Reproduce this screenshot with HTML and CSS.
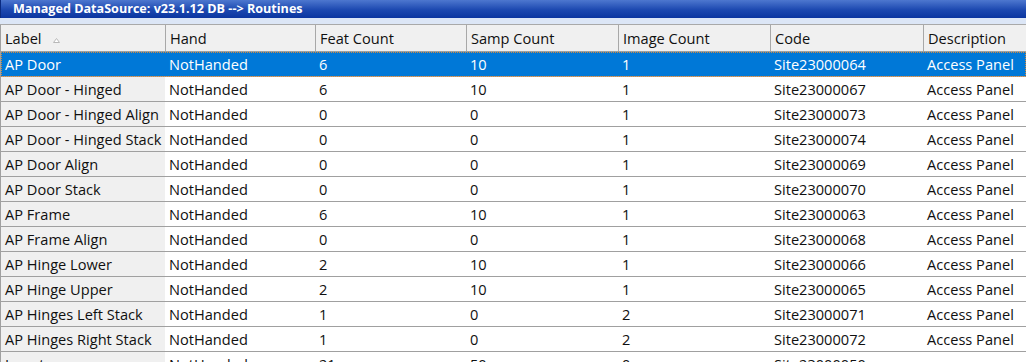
FILE: index.html
```html
<!DOCTYPE html>
<html>
<head>
<meta charset="utf-8">
<link rel="stylesheet" href="styles.css">
</head>
<body>
<div class="window">
  <div class="titlebar">Managed DataSource: v23.1.12 DB --&gt; Routines</div>
  <div class="strip"></div>
  <div class="grid">
    <div class="row head">
      <div class="cell c1">Label <svg class="sort" width="7" height="5" viewBox="0 0 7 5"><path d="M0.5 4.5 L3.5 0.5 L6.5 4.5 Z" fill="#fff" stroke="#b8b8b8" stroke-width="1"/></svg></div>
      <div class="cell">Hand</div>
      <div class="cell">Feat Count</div>
      <div class="cell">Samp Count</div>
      <div class="cell">Image Count</div>
      <div class="cell">Code</div>
      <div class="cell last">Description</div>
    </div>
    <div class="row sel">
      <div class="cell c1">AP Door</div><div class="cell">NotHanded</div><div class="cell">6</div><div class="cell">10</div><div class="cell">1</div><div class="cell">Site23000064</div><div class="cell last">Access Panel</div>
    </div>
    <div class="row">
      <div class="cell c1">AP Door - Hinged</div><div class="cell">NotHanded</div><div class="cell">6</div><div class="cell">10</div><div class="cell">1</div><div class="cell">Site23000067</div><div class="cell last">Access Panel</div>
    </div>
    <div class="row">
      <div class="cell c1">AP Door - Hinged Align</div><div class="cell">NotHanded</div><div class="cell">0</div><div class="cell">0</div><div class="cell">1</div><div class="cell">Site23000073</div><div class="cell last">Access Panel</div>
    </div>
    <div class="row">
      <div class="cell c1">AP Door - Hinged Stack</div><div class="cell">NotHanded</div><div class="cell">0</div><div class="cell">0</div><div class="cell">1</div><div class="cell">Site23000074</div><div class="cell last">Access Panel</div>
    </div>
    <div class="row">
      <div class="cell c1">AP Door Align</div><div class="cell">NotHanded</div><div class="cell">0</div><div class="cell">0</div><div class="cell">1</div><div class="cell">Site23000069</div><div class="cell last">Access Panel</div>
    </div>
    <div class="row">
      <div class="cell c1">AP Door Stack</div><div class="cell">NotHanded</div><div class="cell">0</div><div class="cell">0</div><div class="cell">1</div><div class="cell">Site23000070</div><div class="cell last">Access Panel</div>
    </div>
    <div class="row">
      <div class="cell c1">AP Frame</div><div class="cell">NotHanded</div><div class="cell">6</div><div class="cell">10</div><div class="cell">1</div><div class="cell">Site23000063</div><div class="cell last">Access Panel</div>
    </div>
    <div class="row">
      <div class="cell c1">AP Frame Align</div><div class="cell">NotHanded</div><div class="cell">0</div><div class="cell">0</div><div class="cell">1</div><div class="cell">Site23000068</div><div class="cell last">Access Panel</div>
    </div>
    <div class="row">
      <div class="cell c1">AP Hinge Lower</div><div class="cell">NotHanded</div><div class="cell">2</div><div class="cell">10</div><div class="cell">1</div><div class="cell">Site23000066</div><div class="cell last">Access Panel</div>
    </div>
    <div class="row">
      <div class="cell c1">AP Hinge Upper</div><div class="cell">NotHanded</div><div class="cell">2</div><div class="cell">10</div><div class="cell">1</div><div class="cell">Site23000065</div><div class="cell last">Access Panel</div>
    </div>
    <div class="row">
      <div class="cell c1">AP Hinges Left Stack</div><div class="cell">NotHanded</div><div class="cell">1</div><div class="cell">0</div><div class="cell">2</div><div class="cell">Site23000071</div><div class="cell last">Access Panel</div>
    </div>
    <div class="row">
      <div class="cell c1">AP Hinges Right Stack</div><div class="cell">NotHanded</div><div class="cell">1</div><div class="cell">0</div><div class="cell">2</div><div class="cell">Site23000072</div><div class="cell last">Access Panel</div>
    </div>
    <div class="row">
      <div class="cell c1">Inserts</div><div class="cell">NotHanded</div><div class="cell">21</div><div class="cell">50</div><div class="cell">0</div><div class="cell">Site23000050</div><div class="cell last"></div>
    </div>
  </div>
</div>
</body>
</html>
```

FILE: styles.css
```css
html, body {
  margin: 0;
  padding: 0;
  background: #ffffff;
  overflow: hidden;
}
.window {
  width: 1026px;
  height: 362px;
  overflow: hidden;
  font-family: "Open Sans", "Noto Sans", sans-serif;
}
.titlebar {
  height: 18px;
  line-height: 17px;
  padding-left: 12px;
  color: #ffffff;
  font-weight: 700;
  font-size: 12.6px;
  background: linear-gradient(#4d77cf, #1c48b0 55%, #0b35a0);
  border-left: 1px solid #0a2a80;
  box-sizing: border-box;
  white-space: nowrap;
}
.strip {
  height: 6px;
  background: #dce6f6;
  border-bottom: 1px solid #a9a9a9;
}
.grid {
  border-left: 1px solid #a0a0a0;
}
.row {
  display: grid;
  grid-template-columns: 164px 150px 151px 152px 152px 153px 1fr;
  height: 25px;
  border-bottom: 1px solid #a0a0a0;
  box-sizing: border-box;
  font-size: 14.6px;
  color: #101010;
}
.cell {
  padding-left: 4px;
  padding-top: 1px;
  line-height: 23px;
  white-space: nowrap;
  overflow: hidden;
  background: #ffffff;
}
.row .c1 {
  background: #f0f0f0;
}
.head {
  height: 27px;
  border-bottom: 1px solid #a0a0a0;
}
.head .cell {
  background: #f0f0f0;
  border-left: 1px solid #a8a8a8;
  line-height: 25px;
}
.head .c1 {
  border-left: none;
}
.sort {
  margin-left: 8px;
  vertical-align: 1px;
}
.sel {
  outline: 1px dotted #d08a40;
  outline-offset: -1px;
  position: relative;
}
.sel .cell,
.sel .c1 {
  background: #0078d7;
  color: #ffffff;
}
```
